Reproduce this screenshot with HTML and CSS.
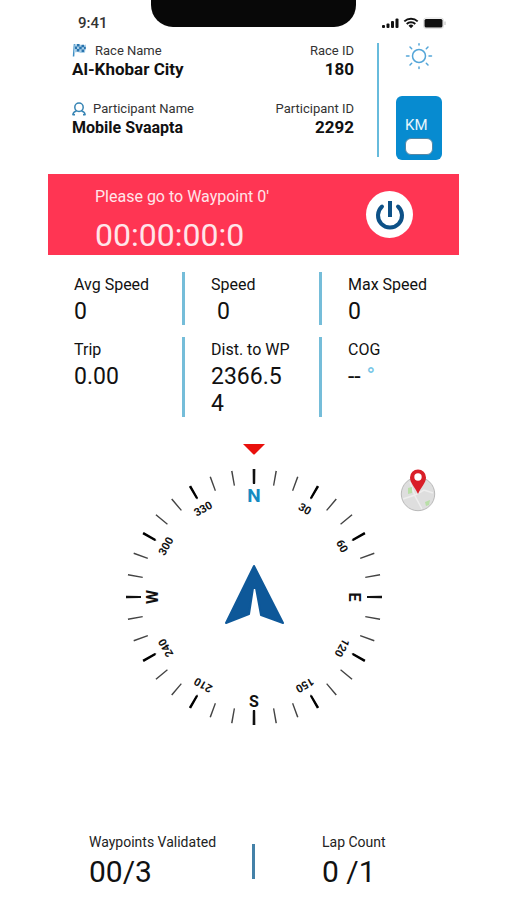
FILE: index.html
```html
<!DOCTYPE html>
<html lang="en">
<head>
<meta charset="utf-8">
<meta name="viewport" content="width=device-width, initial-scale=1">
<title>Race Navigator</title>
<link rel="stylesheet" href="styles.css">
</head>
<body>
<main class="screen">
  <div class="status">
    <time class="clock">9:41</time>
    <div class="notch"></div>
    <svg class="status-icons" width="66" height="14" viewBox="0 0 66 14" aria-hidden="true">
      <g fill="#111"><rect x="1" y="9" width="3" height="3" rx="1"/><rect x="5.500" y="7.500" width="3" height="4.500" rx="1"/><rect x="10" y="5" width="3" height="7" rx="1"/><rect x="14.500" y="2.500" width="3" height="9.500" rx="1"/>
      <path d="M30 12.300l-2.500-2.600a3.500 3.500 0 0 1 5 0z"/><rect x="43.500" y="3" width="18" height="8.500" rx="1.500"/></g>
      <g fill="none" stroke="#111" stroke-width="1.900"><path d="M23.300 5.400a9.700 9.700 0 0 1 13.400 0M25.700 8a6.200 6.200 0 0 1 8.600 0"/></g>
      <rect x="42.500" y="2" width="20" height="10.500" rx="2.500" fill="none" stroke="#ccc" stroke-width=".6"/><path d="M64 5.500v3.500" stroke="#bbb"/>
    </svg>
  </div>

  <header class="race">
    <dl class="details">
      <div class="detail">
        <dt><svg width="16" height="15" viewBox="0 0 16 15" aria-hidden="true"><path d="M2.500 1l-1 12.500" stroke="#3f8fc4" stroke-width="1.500"/><path d="M2.500 1.500q3-1 5.500 0t6 0l-1 8q-3 1-5.500 0t-5.500 .5z" fill="#a9cfe8"/><path d="M5 1h2.500v2.500h-2.500zM9.500 1.800h2.500v2.500h-2.500zM7.200 3.800h2.500v2.500h-2.500zM12 3.800h1.800v2.500h-1.800zM3 3.500h2v2.500h-2zM4.800 6.100h2.500v2.500h-2.500zM9.600 6.500h2.500v2.500h-2.500z" fill="#2a74ae"/></svg>Race Name</dt>
        <dd>Al-Khobar City</dd>
      </div>
      <div class="detail end"><dt>Race ID</dt><dd>180</dd></div>
      <div class="detail">
        <dt><svg width="14" height="14" viewBox="0 0 14 14" fill="none" stroke="#3684b4" stroke-width="1.500" aria-hidden="true"><circle cx="7" cy="5.300" r="4.200"/><path d="M.8 13q.5-3.500 3.800-4M13.200 13q-.5-3.500-3.800-4M.5 12.800h2.500M11 12.800h2.500"/></svg>Participant Name</dt>
        <dd class="person">Mobile Svaapta</dd>
      </div>
      <div class="detail end"><dt>Participant ID</dt><dd>2292</dd></div>
    </dl>
    <div class="controls">
      <button class="bare" aria-label="Brightness"><svg width="28" height="28" viewBox="0 0 28 28" fill="none" stroke="#53a5d8" stroke-width="1.500" stroke-linecap="round"><circle cx="14" cy="13" r="6.500"/><path d="M14 .8v1.200M14 24v1.500M1.500 13h2.500M24 13h2.500M5 4l1.700 1.700M21.300 20.300l1.700 1.700M5 22l1.700-1.700M21.300 5.700l1.700-1.700"/></svg></button>
      <button class="unit">KM<span class="knob"></span></button>
    </div>
  </header>

  <section class="banner">
    <div>
      <p class="notice">Please go to Waypoint 0'</p>
      <p class="timer">00:00:00:0</p>
    </div>
    <button class="power" aria-label="Power"><svg width="30" height="30" viewBox="0 0 30 30" fill="none" stroke="#0d5187" stroke-width="4"><path d="M15 1v16"/><path d="M7 6.500a12 12 0 1 0 16 0" stroke-linecap="round"/></svg></button>
  </section>

  <dl class="stats">
    <div><dt>Avg Speed</dt><dd>0</dd></div>
    <div><dt>Speed</dt><dd class="inset">0</dd></div>
    <div><dt>Max Speed</dt><dd>0</dd></div>
    <div><dt>Trip</dt><dd>0.00</dd></div>
    <div><dt>Dist. to WP</dt><dd>2366.54</dd></div>
    <div><dt>COG</dt><dd>-- <span class="degree">°</span></dd></div>
  </dl>

  <section class="compass">
    <svg class="dial" width="260" height="284" viewBox="-130 -154 260 284" role="img" aria-label="Compass">
      <path d="M-11-153h22l-10 10q-1 1-2 0z" fill="#e9100c"/>
      <g fill="none" stroke="#111">
        <circle r="120.500" stroke="#444" stroke-width="15" pathLength="756" stroke-dasharray="1.400 19.600" stroke-dashoffset=".7"/>
        <circle r="121" stroke="#000" stroke-width="14" pathLength="756" stroke-dasharray="2.400 60.600" stroke-dashoffset="1.200"/>
        <path stroke-width="2.200" d="M0-128v15M0 128v-15M128 0h-15M-128 0h15"/>
      </g>
      <g class="cardinals">
        <text class="north" y="-95">N</text>
        <text y="-95" transform="rotate(90)">E</text>
        <text y="110">S</text>
        <text y="-96" transform="rotate(270)">W</text>
      </g>
      <g class="bearings">
        <text y="-98" transform="rotate(30)">30</text>
        <text y="-98" transform="rotate(60)">60</text>
        <text y="-98" transform="rotate(120)">120</text>
        <text y="-98" transform="rotate(150)">150</text>
        <text y="-98" transform="rotate(210)">210</text>
        <text y="-98" transform="rotate(240)">240</text>
        <text y="-98" transform="rotate(300)">300</text>
        <text y="-98" transform="rotate(330)">330</text>
      </g>
      <path d="M0-31L29 26L7 18L2-9H-1L-5 17L-28 26Z" fill="#0e5899" stroke="#0e5899" stroke-width="2" stroke-linejoin="round"/>
    </svg>
    <button class="bare map" aria-label="Map"><svg width="36" height="44" viewBox="0 0 36 44"><circle cx="18" cy="26" r="16.700" fill="#dedede" stroke="#b9b9b9"/><path d="M3 31l12-4 9-5 9 3M10 14l5 14 7 13" fill="none" stroke="#eee" stroke-width="1.500"/><path d="M8 20l4-1v6l-4 1zM25 34l5-2-1 5-3 1z" fill="#b9dfa8"/><path d="M18 26C15 19 10 15 10 9.500a8 8 0 0 1 16 0C26 15 21 19 18 26z" fill="#d91e28"/><circle cx="18" cy="9" r="3.700" fill="#fff"/></svg></button>
  </section>

  <footer class="progress">
    <dl><dt>Waypoints Validated</dt><dd>00/3</dd></dl>
    <span class="bar"></span>
    <dl><dt>Lap Count</dt><dd>0 /1</dd></dl>
  </footer>
</main>
</body>
</html>
```
FILE: styles.css
```css
* { box-sizing: border-box; }
body {
  margin: 0;
  background: #fff;
  color: #111;
  font-family: Roboto, "Liberation Sans", sans-serif;
}
dl, dd, p { margin: 0; }
button { border: 0; padding: 0; font: inherit; cursor: pointer; }
svg { display: block; }
.bare { background: none; }

.screen {
  display: flex;
  flex-direction: column;
  min-height: 100vh;
  padding: 0 48px 11px;
}

.status {
  display: grid;
  grid-template-columns: 1fr 2fr 1fr;
  height: 43px;
}
.clock { padding: 14px 0 0 30px; font-size: 15px; line-height: 18px; font-weight: 500; color: #333; }
.notch { height: 27px; background: #080808; border-radius: 0 0 22px 22px; }
.status-icons { justify-self: end; margin: 16px 12px 0 0; }

.race { display: flex; height: 114px; }
.details {
  flex: 1;
  display: grid;
  grid-template-columns: auto auto;
  align-content: start;
  justify-content: space-between;
  row-gap: 20px;
  padding: 0 23px 0 24px;
  border-right: 2px solid #67bbdc;
}
.detail dt {
  display: flex;
  align-items: center;
  gap: 7px;
  font-size: 13px;
  line-height: 15px;
  color: #333;
}
.detail dd { font-size: 17px; line-height: 23px; font-weight: 700; }
.detail .person { font-size: 16px; }
.end { text-align: right; }
.end dt { justify-content: flex-end; }
.controls {
  display: flex;
  flex-direction: column;
  align-items: center;
  gap: 25px;
  width: 80px;
}
.unit {
  display: flex;
  flex-direction: column;
  align-items: flex-start;
  gap: 4px;
  flex: none;
  width: 46px;
  height: 64px;
  padding: 20px 0 0 9px;
  border-radius: 6px;
  background: #078bd0;
  color: #e8f5fc;
  font-size: 15px;
  line-height: 18px;
}
.knob { width: 28px; height: 17px; border: 1px solid #5687a5; border-radius: 6px; background: #fff; }

.banner {
  display: flex;
  justify-content: space-between;
  height: 81px;
  margin-top: 17px;
  padding: 13px 46px 0 47px;
  background: #ff3553;
  color: #ffe5ea;
}
.notice { font-size: 16px; line-height: 20px; }
.timer { font-size: 32px; line-height: 40px; margin-top: 8px; }
.power {
  display: grid;
  place-items: center;
  width: 47px;
  height: 47px;
  margin-top: 4px;
  border-radius: 50%;
  background: #fff;
}

.stats {
  display: grid;
  grid-template-columns: repeat(3, minmax(0, 1fr));
  row-gap: 12px;
  margin-top: 17px;
}
.stats div { padding: 3px 32px 0 26px; border-right: 3px solid #75bdd9; }
.stats div:nth-child(3n) { border: 0; padding-right: 0; }
.stats dt { font-size: 16px; line-height: 20px; white-space: nowrap; }
.stats dd { margin-top: 3px; font-size: 23px; line-height: 27px; overflow-wrap: anywhere; }
.stats .inset { padding-left: 6px; }
.degree { color: #75c5e6; }

.compass {
  display: grid;
  grid-template-columns: 1fr auto 1fr;
  margin-top: 26px;
}
.dial { grid-column: 2; }
.map { justify-self: center; align-self: start; margin-top: 25px; margin-right: 6px; }
.cardinals, .bearings { text-anchor: middle; font-weight: 700; fill: #111; }
.cardinals { font-size: 16px; }
.cardinals .north { font-size: 19px; fill: #168bc2; }
.bearings { font-size: 11px; }

.progress {
  display: grid;
  grid-template-columns: 1fr auto 1fr;
  align-items: center;
  margin-top: auto;
}
.progress dl { padding-left: 41px; }
.progress dl:last-child { padding-left: 67px; }
.progress dt { font-size: 14px; line-height: 18px; color: #222; white-space: nowrap; }
.progress dd { margin-top: 4px; font-size: 30px; line-height: 34px; }
.bar { width: 3px; height: 35px; background: #4481a8; }
```
